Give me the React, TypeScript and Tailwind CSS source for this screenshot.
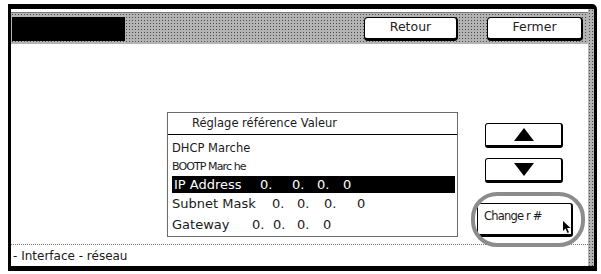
import React from "react";

const dots =
  "bg-[#b4b4b4] bg-[radial-gradient(#4a4a4a_0.7px,transparent_0.9px)] bg-[length:3px_3px]";

function TopButton({ label, w }: { label: string; w: string }) {
  return (
    <div
      className={`${w} h-[24px] bg-white border-[1.5px] border-black border-b-[3px] border-r-[2.5px] rounded-[4px] flex justify-center pt-[1px] text-[12.5px] leading-[16px] text-[#222]`}
    >
      {label}
    </div>
  );
}

function ArrowButton({ up }: { up?: boolean }) {
  return (
    <div className="w-[78px] h-[25px] ml-[8px] bg-white border-[1.5px] border-black border-b-[3px] border-r-[2.5px] rounded-[3px] flex items-center justify-center">
      <svg width="20" height="13" viewBox="0 0 20 13">
        {up ? (
          <polygon points="10,0 20,13 0,13" fill="#000" />
        ) : (
          <polygon points="0,0 20,0 10,13" fill="#000" />
        )}
      </svg>
    </div>
  );
}

export default function App() {
  return (
    <div className="w-[601px] h-[274px] bg-white pt-[4px] pl-[8px] font-['DejaVu_Sans',sans-serif] text-[#1a1a1a]">
      <div className="w-[589px] h-[267px] flex border-l-[3px] border-t-[5px] border-b-[5px] border-r-[3px] border-black rounded-tr-[5px]">
        <div className="flex-1 flex flex-col">
          <div className="h-[3px] bg-white" />
          <div className="h-[1px] bg-[#777]" />
          {/* header bar */}
          <div className={`h-[31px] flex items-center ${dots}`}>
            <div className="ml-[1px] w-[113px] h-[24px] bg-black" />
            <div className="flex-1" />
            <TopButton label="Retour" w="w-[94px]" />
            <div className="w-[29px]" />
            <TopButton label="Fermer" w="w-[96px]" />
            <div className="w-[5px]" />
          </div>

          {/* content */}
          <div className="relative h-[200px] bg-white flex pl-[156px] pt-[68px]">
            <div className="w-[291px] h-[125px] border border-[#6b6b6b] flex flex-col">
              <div className="h-[22px] pl-[24px] flex items-center text-[11.5px] border-b border-black">
                Réglage référence Valeur
              </div>
              <div className="pt-[4px] flex flex-col">
                <div className="h-[19px] pl-[4px] flex items-center text-[11.5px]">DHCP Marche</div>
                <div className="h-[18px] pl-[4px] flex items-center text-[11px] tracking-[-0.9px]">
                  BOOTP Marc he
                </div>
                <div className="h-[17px] ml-[4px] mr-[2px] bg-black text-white flex items-center pl-[2px] text-[13px]">
                  <span className="w-[86px]">IP Address</span>
                  <span className="w-[32px]">0.</span>
                  <span className="w-[25px]">0.</span>
                  <span className="w-[26px]">0.</span>
                  <span>0</span>
                </div>
                <div className="h-[21px] pl-[4px] flex items-center text-[13px]">
                  <span className="w-[100px]">Subnet Mask</span>
                  <span className="w-[25px]">0.</span>
                  <span className="w-[27px]">0.</span>
                  <span className="w-[33px]">0.</span>
                  <span>0</span>
                </div>
                <div className="h-[21px] pl-[4px] flex items-center text-[13px]">
                  <span className="w-[80px]">Gateway</span>
                  <span className="w-[21px]">0.</span>
                  <span className="w-[24px]">0.</span>
                  <span className="w-[26px]">0.</span>
                  <span>0</span>
                </div>
              </div>
            </div>

            <div className="ml-[19px] pt-[11px] flex flex-col">
              <ArrowButton up />
              <div className="h-[10px]" />
              <ArrowButton />
              <div className="h-[20px]" />
              <div className="relative w-[96px] h-[34px] bg-white border-[1.5px] border-black border-b-[3px] border-r-[2.5px] rounded-[3px] pl-[6px] pt-[5px] text-[11.5px] tracking-[-0.8px] leading-[14px]">
                Change r #
                <svg
                  className="absolute right-[0px] bottom-[1px]"
                  width="8"
                  height="12"
                  viewBox="0 0 8 12"
                >
                  <polygon points="0,0 0,10 2.5,7.5 4.5,12 6,11.3 4,7 7.5,7" fill="#000" />
                </svg>
              </div>
            </div>

            {/* highlight ring */}
            <div className="absolute left-[460px] top-[148px] w-[114px] h-[55px] rounded-[26px] border-[4px] border-[#8c8c8c] z-10" />
          </div>

          <div className="h-[1px] border-t border-dotted border-[#777]" />
          <div className="h-[21px] bg-white flex items-center pl-[2px] text-[12px]">
            - Interface - réseau
          </div>
        </div>
        <div className={`w-[6px] ${dots}`} />
      </div>
    </div>
  );
}
